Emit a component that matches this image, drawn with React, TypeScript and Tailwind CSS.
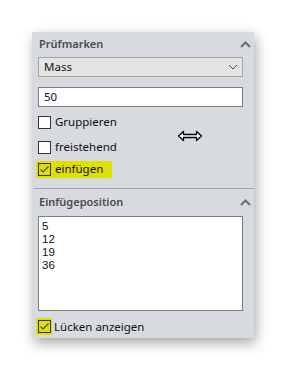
import React from 'react'

const font = { fontFamily: '"Noto Sans", "Open Sans", sans-serif' }

function ChevronUp() {
  return (
    <svg width="11" height="7" viewBox="0 0 11 7" className="block">
      <path d="M1 6 L5.5 1.5 L10 6" fill="none" stroke="#6f7277" strokeWidth="2.2" />
    </svg>
  )
}

function ChevronDown() {
  return (
    <svg width="10" height="6" viewBox="0 0 10 6" className="block">
      <path d="M1 1 L5 5 L9 1" fill="none" stroke="#4a4a4a" strokeWidth="1" />
    </svg>
  )
}

function Checkbox({ checked }: { checked?: boolean }) {
  return (
    <div
      className={`w-[13px] h-[13px] border border-[#333] flex items-center justify-center ${
        checked ? 'bg-transparent' : 'bg-white'
      }`}
    >
      {checked && (
        <svg width="11" height="11" viewBox="0 0 11 11">
          <path d="M1.5 5.5 L4 8 L9.5 2.5" fill="none" stroke="#4d4d10" strokeWidth="1.2" />
        </svg>
      )}
    </div>
  )
}

function Row({ label, checked, highlight, className }: { label: string; checked?: boolean; highlight?: boolean; className?: string }) {
  return (
    <div className={`h-[22px] flex items-center pl-[4px] ${className ?? ''}`}>
      <div className={`flex items-center h-[17px] pl-[2px] pr-[9px] ${highlight ? 'bg-[#dfe000]' : ''}`}>
        <Checkbox checked={checked} />
        <span className="ml-[4px] text-[11.5px] text-[#111]">{label}</span>
      </div>
    </div>
  )
}

export default function App() {
  return (
    <div className="min-h-screen bg-white pt-8 pl-8 relative" style={font}>
      <div className="w-[222px] bg-[#d7dadf] shadow-[2px_5px_12px_rgba(0,0,0,0.35)]">
        {/* Prüfmarken */}
        <div className="h-[25px] flex items-center justify-between pl-[7px] pr-[3px]">
          <span className="text-[11px] font-semibold text-[#4b4b4b]">Prüfmarken</span>
          <ChevronUp />
        </div>
        <div className="ml-[6px] w-[205px] h-[20px] bg-[#e4e4e4] border border-[#a5a5a5] flex items-center justify-between pl-[5px] pr-[4px]">
          <span className="text-[11.5px] text-[#111]">Mass</span>
          <ChevronDown />
        </div>
        <div className="ml-[6px] mt-[10px] w-[205px] h-[20px] bg-white border border-[#7d7d7d] flex items-center pl-[5px]">
          <span className="text-[11.5px] text-[#111]">50</span>
        </div>
        <Row label="Gruppieren" className="mt-[4px]" />
        <Row label="freistehend" className="mt-[3px]" />
        <Row label="einfügen" checked highlight />
        <div className="mt-[8px] ml-[2px] h-px bg-[#a3a5a8]" />

        {/* Einfügeposition */}
        <div className="h-[26px] flex items-center justify-between pl-[7px] pr-[3px]">
          <span className="text-[11px] font-semibold text-[#4b4b4b]">Einfügeposition</span>
          <ChevronUp />
        </div>
        <div className="ml-[6px] mt-px w-[205px] h-[95px] bg-white border border-[#7d7d7d] pl-[3px] pt-[3px] flex flex-col">
          {['5', '12', '19', '36'].map((v) => (
            <span key={v} className="text-[11.5px] leading-[13px] text-[#111]" style={{ fontFamily: '"Liberation Sans", sans-serif' }}>
              {v}
            </span>
          ))}
        </div>
        <div className="h-[23px] mt-[4px] flex items-center pl-[4px]">
          <div className="flex items-center h-[17px] pl-[2px] pr-[1px] bg-[#dfe000]">
            <Checkbox checked />
          </div>
          <span className="ml-[2px] text-[11.5px] text-[#111]">Lücken anzeigen</span>
        </div>
      </div>

      {/* resize cursor */}
      <svg className="absolute left-[177px] top-[130px]" width="26" height="12" viewBox="0 0 26 12">
        <path
          d="M1.5 6 L6.5 1.5 L6.5 4.5 L19.5 4.5 L19.5 1.5 L24.5 6 L19.5 10.5 L19.5 7.5 L6.5 7.5 L6.5 10.5 Z"
          fill="#fff"
          stroke="#000"
          strokeWidth="1.3"
          strokeLinejoin="round"
        />
      </svg>
    </div>
  )
}
